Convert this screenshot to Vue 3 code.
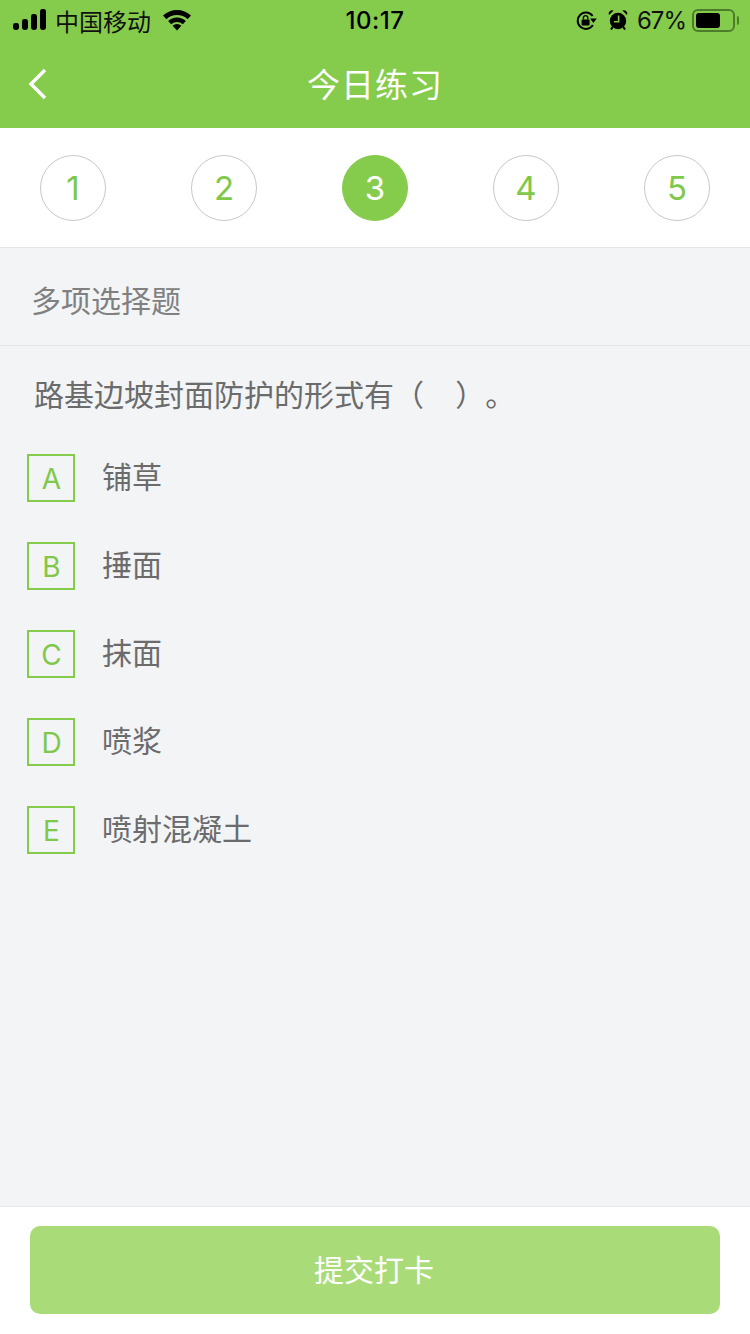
<template>
  <div class="page">
    <header class="top">
      <div class="status">
        <div class="status-left">
          <svg class="signal" width="34" height="22" viewBox="0 0 34 22">
            <rect x="0" y="14" width="6" height="7" rx="2.4" />
            <rect x="9" y="10" width="6" height="11" rx="2.4" />
            <rect x="18" y="5" width="6" height="16" rx="2.4" />
            <rect x="27" y="0" width="6" height="21" rx="2.4" />
          </svg>
          <span class="carrier">中国移动</span>
          <svg class="wifi" width="28" height="22" viewBox="0 0 28 22">
            <path d="M0 6.5 A20.5 20.5 0 0 1 28 6.5 L24.6 10.2 A15.5 15.5 0 0 0 3.4 10.2 Z" />
            <path d="M5.1 12 A13 13 0 0 1 22.9 12 L19.8 15.3 A8.5 8.5 0 0 0 8.2 15.3 Z" />
            <path d="M14 21.5 L9.6 16.75 A6.5 6.5 0 0 1 18.4 16.75 Z" />
          </svg>
        </div>
        <span class="clock">10:17</span>
        <div class="status-right">
          <svg class="lock" width="22" height="20" viewBox="0 0 22 20">
            <path d="M17.9 15 A8.2 8.2 0 1 1 17.6 6" fill="none" stroke="#000" stroke-width="2" />
            <path d="M15 8.5 L21.8 8.5 L18.4 13 Z" />
            <rect x="6.6" y="9.4" width="8" height="6.2" rx="1" />
            <path d="M8.4 9.4 V7.8 A2.2 2.2 0 0 1 12.8 7.8 V9.4" fill="none" stroke="#000" stroke-width="1.4" />
          </svg>
          <svg class="alarm" width="20" height="20" viewBox="0 0 20 20">
            <circle cx="10" cy="11" r="8.2" />
            <path d="M1 5 A3.4 3.4 0 0 1 5.6 0.6 Z M19 5 A3.4 3.4 0 0 0 14.4 0.6 Z" />
            <path d="M4.6 17 L3 19.6 M15.4 17 L17 19.6" stroke="#000" stroke-width="2" />
            <path d="M10.6 5.5 V11.8 H6" fill="none" stroke="#86cc4c" stroke-width="1.6" />
          </svg>
          <span class="percent">67%</span>
          <div class="battery">
            <div class="battery-fill"></div>
          </div>
          <div class="battery-tip"></div>
        </div>
      </div>
      <div class="nav">
        <svg class="back" width="22" height="34" viewBox="0 0 22 34">
          <path d="M18 3 L4 17 L18 31" fill="none" stroke="#fff" stroke-width="3.4" />
        </svg>
        <span class="nav-title">今日练习</span>
      </div>
    </header>

    <div class="steps">
      <div
        v-for="n in steps"
        :key="n"
        class="step"
        :class="{ active: n === current }"
      >{{ n }}</div>
    </div>

    <div class="type">多项选择题</div>

    <main class="body">
      <p class="question">路基边坡封面防护的形式有（&nbsp;&nbsp;&nbsp;&nbsp;）。</p>
      <div class="options">
        <div v-for="opt in options" :key="opt.key" class="option">
          <div class="opt-key">{{ opt.key }}</div>
          <span class="opt-text">{{ opt.text }}</span>
        </div>
      </div>
    </main>

    <footer class="foot">
      <button class="submit">提交打卡</button>
    </footer>
  </div>
</template>

<script setup>
const steps = [1, 2, 3, 4, 5];
const current = 3;

const options = [
  { key: "A", text: "铺草" },
  { key: "B", text: "捶面" },
  { key: "C", text: "抹面" },
  { key: "D", text: "喷浆" },
  { key: "E", text: "喷射混凝土" }
];
</script>

<style>
html,
body {
  margin: 0;
  background: #f2f4f6;
}
</style>

<style scoped>
.page {
  width: 750px;
  height: 1334px;
  display: flex;
  flex-direction: column;
  background: #f2f4f6;
  font-family: "Liberation Sans", "Noto Sans CJK SC", sans-serif;
  overflow: hidden;
}

/* header */
.top {
  height: 128px;
  background: #86cc4c;
  flex-shrink: 0;
}

.status {
  height: 40px;
  display: flex;
  align-items: center;
  justify-content: space-between;
  position: relative;
  padding: 0 11px 0 13px;
  color: #000;
}

.status-left,
.status-right {
  display: flex;
  align-items: center;
}

.status svg {
  fill: #000;
  display: block;
}

.carrier {
  font-size: 24px;
  margin-left: 8px;
  color: #111;
}

.wifi {
  margin-left: 12px;
}

.clock {
  position: absolute;
  left: 0;
  right: 0;
  text-align: center;
  font-size: 24px;
  font-family: "Inter", sans-serif;
  font-weight: 500;
  letter-spacing: 0.5px;
}

.alarm {
  margin-left: 11px;
}

.percent {
  font-size: 24px;
  font-family: "Inter", sans-serif;
  margin-left: 9px;
  color: #111;
  letter-spacing: -1px;
}

.battery {
  width: 43px;
  height: 23px;
  margin-left: 6px;
  box-sizing: border-box;
  border: 2px solid #4d7d2c;
  border-radius: 6px;
  padding: 2px;
}

.battery-fill {
  width: 24px;
  height: 15px;
  background: #000;
  border-radius: 3px;
}

.battery-tip {
  width: 2px;
  height: 9px;
  margin-left: 2px;
  background: #4d7d2c;
  border-radius: 0 2px 2px 0;
}

.nav {
  height: 88px;
  display: flex;
  align-items: center;
  justify-content: center;
  position: relative;
}

.back {
  position: absolute;
  left: 27px;
  top: 27px;
}

.nav-title {
  color: #fff;
  font-size: 33px;
  letter-spacing: 1px;
  margin-bottom: 2px;
}

/* steps */
.steps {
  height: 120px;
  box-sizing: border-box;
  background: #fff;
  border-bottom: 1px solid #e4e4e4;
  display: flex;
  justify-content: space-between;
  align-items: flex-start;
  padding: 27px 40px 0;
  flex-shrink: 0;
}

.step {
  width: 66px;
  height: 66px;
  box-sizing: border-box;
  border: 1px solid #c8c8c8;
  border-radius: 50%;
  display: flex;
  align-items: center;
  justify-content: center;
  color: #80c84a;
  font-family: "Inter", sans-serif;
  font-weight: 400;
  font-size: 33px;
}

.step.active {
  background: #86cc4c;
  border-color: #86cc4c;
  color: #fff;
}

/* question */
.type {
  height: 98px;
  line-height: 108px;
  box-sizing: border-box;
  padding-left: 31px;
  border-bottom: 1px solid #e6e7e9;
  color: #808080;
  font-size: 30px;
  flex-shrink: 0;
}

.body {
  flex: 1;
}

.question {
  margin: 0;
  padding: 30px 0 0 34px;
  font-size: 30px;
  line-height: 40px;
  color: #6b6b6b;
  text-spacing-trim: space-all;
  word-spacing: -0.5px;
}

.options {
  display: flex;
  flex-direction: column;
  gap: 40px;
  padding: 38px 0 0 27px;
}

.option {
  display: flex;
  align-items: center;
  height: 48px;
}

.opt-key {
  width: 48px;
  height: 48px;
  box-sizing: border-box;
  border: 2px solid #86cc4c;
  padding: 1px 0 0 1px;
  display: flex;
  align-items: center;
  justify-content: center;
  color: #80c84a;
  font-family: "Inter", sans-serif;
  font-weight: 400;
  font-size: 28px;
}

.opt-text {
  margin-left: 27px;
  margin-bottom: 7px;
  font-size: 30px;
  color: #6b6b6b;
}

/* footer */
.foot {
  height: 128px;
  box-sizing: border-box;
  background: #fff;
  border-top: 1px solid #e6e7ea;
  padding: 19px 30px 0;
  flex-shrink: 0;
}

.submit {
  display: block;
  width: 100%;
  height: 88px;
  border: none;
  border-radius: 10px;
  padding: 0 2px 4px 0;
  background: #a9dc78;
  color: #fff;
  font-family: inherit;
  font-size: 30px;
}
</style>
